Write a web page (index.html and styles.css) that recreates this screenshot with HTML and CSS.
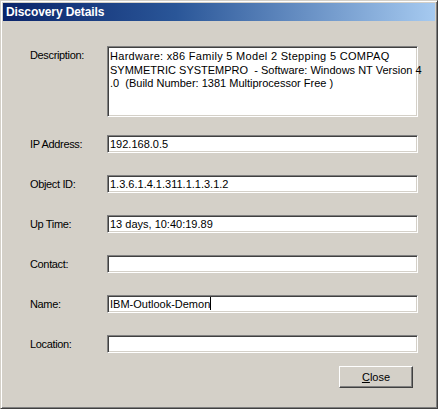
FILE: index.html
```html
<!DOCTYPE html>
<html>
<head>
<meta charset="utf-8">
<link rel="stylesheet" href="styles.css">
</head>
<body>
<div class="window">
  <div class="titlebar">Discovery Details</div>
  <div class="content">
    <div class="row row-top">
      <div class="label label-top">Description:</div>
      <div class="field area"><span class="line wide">Hardware: x86 Family 5 Model 2 Stepping 5 COMPAQ</span><span class="line">SYMMETRIC SYSTEMPRO &nbsp;- Software: Windows NT Version 4</span><span class="line">.0 &nbsp;(Build Number: 1381 Multiprocessor Free )</span></div>
    </div>
    <div class="row first">
      <div class="label">IP Address:</div>
      <div class="field">192.168.0.5</div>
    </div>
    <div class="row">
      <div class="label">Object ID:</div>
      <div class="field">1.3.6.1.4.1.311.1.1.3.1.2</div>
    </div>
    <div class="row">
      <div class="label">Up Time:</div>
      <div class="field">13 days, 10:40:19.89</div>
    </div>
    <div class="row">
      <div class="label">Contact:</div>
      <div class="field"></div>
    </div>
    <div class="row">
      <div class="label">Name:</div>
      <div class="field">IBM-Outlook-Demon<span class="caret"></span></div>
    </div>
    <div class="row">
      <div class="label">Location:</div>
      <div class="field"></div>
    </div>
    <div class="actions">
      <div class="button"><span class="ul">C</span>lose</div>
    </div>
  </div>
</div>
</body>
</html>
```
FILE: styles.css
```css
html, body {
  margin: 0;
  padding: 0;
  background: #d4d0c8;
}
.window {
  width: 438px;
  height: 409px;
  box-sizing: border-box;
  background: #d4d0c8;
  border-top: 1px solid #d4d0c8;
  border-left: 1px solid #d4d0c8;
  border-right: 1px solid #404040;
  border-bottom: 1px solid #404040;
  box-shadow: inset 1px 1px 0 #ffffff, inset -1px -1px 0 #808080;
  padding: 2px 2px 2px 2px;
  font-family: "Liberation Sans", Arial, sans-serif;
  font-size: 11px;
  color: #000;
}
.titlebar {
  height: 18px;
  line-height: 18px;
  background: linear-gradient(to right, #0a246a 0%, #2a5698 40%, #a6caf0 100%);
  color: #fff;
  font-weight: bold;
  font-size: 12px;
  padding-left: 3px;
  letter-spacing: -0.1px;
}
.content {
  padding: 25px 0 0 27px;
  display: flex;
  flex-direction: column;
}
.row {
  display: grid;
  grid-template-columns: 77px 311px;
  align-items: center;
  margin-top: 22px;
}
.row-top {
  align-items: start;
  margin-top: 0;
}
.row.first {
  margin-top: 18px;
}
.label {
  white-space: nowrap;
  letter-spacing: -0.35px;
}
.label-top {
  padding-top: 3px;
}
.field {
  height: 18px;
  box-sizing: border-box;
  background: #fff;
  border-top: 1px solid #808080;
  border-left: 1px solid #808080;
  border-right: 1px solid #ffffff;
  border-bottom: 1px solid #ffffff;
  box-shadow: inset 1px 1px 0 #404040, inset -1px -1px 0 #d4d0c8;
  padding: 0 2px;
  line-height: 16px;
  white-space: nowrap;
}
.area {
  height: 71px;
  line-height: 13.5px;
  padding: 3px 2px;
}
.line {
  display: block;
}
.wide {
  letter-spacing: 0.3px;
}
.caret {
  display: inline-block;
  width: 1px;
  height: 13px;
  background: #000;
  vertical-align: -2px;
}
.actions {
  display: flex;
  justify-content: flex-end;
  padding-right: 22px;
  margin-top: 13px;
}
.button {
  width: 74px;
  height: 22px;
  box-sizing: border-box;
  border-top: 1px solid #ffffff;
  border-left: 1px solid #ffffff;
  border-right: 1px solid #404040;
  border-bottom: 1px solid #404040;
  box-shadow: inset -1px -1px 0 #808080;
  display: flex;
  align-items: center;
  justify-content: center;
}
.ul {
  text-decoration: underline;
}
```
